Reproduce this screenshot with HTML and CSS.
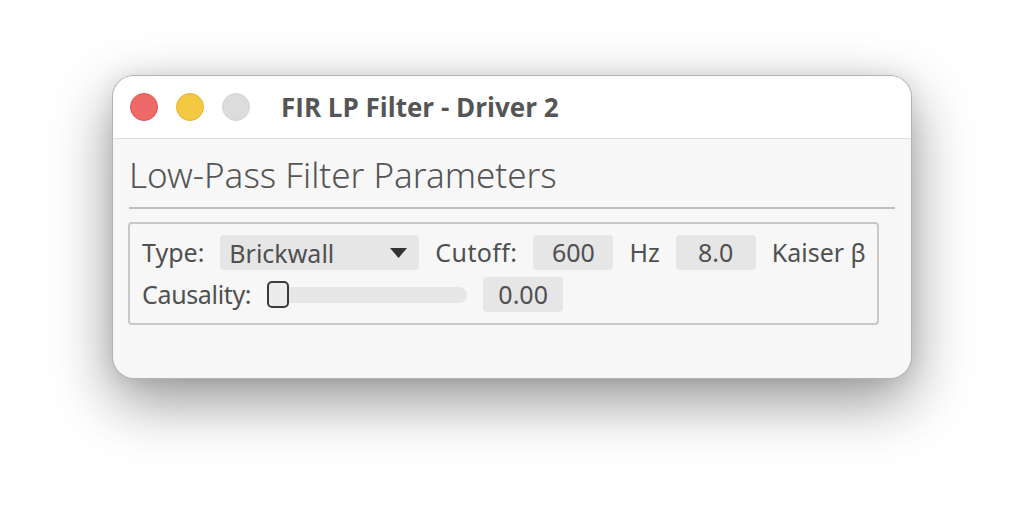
FILE: index.html
```html
<!DOCTYPE html>
<html>
<head>
<meta charset="utf-8">
<link rel="stylesheet" href="styles.css">
</head>
<body>
<div class="stage">
  <div class="window">
    <div class="titlebar">
      <div class="lights">
        <span class="light red"></span>
        <span class="light yellow"></span>
        <span class="light gray"></span>
      </div>
      <div class="title">FIR LP Filter - Driver 2</div>
    </div>
    <div class="content">
      <h1 class="heading">Low-Pass Filter Parameters</h1>
      <div class="sep"></div>
      <div class="group">
        <div class="row">
          <span class="label">Type:</span>
          <div class="dropdown">
            <span>Brickwall</span>
            <svg class="arrow" width="17" height="10" viewBox="0 0 17 10"><path d="M0 0H17L8.5 10Z" fill="#333"/></svg>
          </div>
          <span class="label label-wide">Cutoff:</span>
          <div class="num">600</div>
          <span class="label">Hz</span>
          <div class="num">8.0</div>
          <span class="label">Kaiser β</span>
        </div>
        <div class="row">
          <span class="label label-tight">Causality:</span>
          <div class="slider"><div class="thumb"></div></div>
          <div class="num">0.00</div>
        </div>
      </div>
    </div>
  </div>
</div>
</body>
</html>
```
FILE: styles.css
```css
html, body {
  margin: 0;
  padding: 0;
  background: #ffffff;
}
.stage {
  width: 1024px;
  height: 528px;
  padding: 75px 0 0 112px;
  box-sizing: border-box;
  overflow: hidden;
}
.window {
  width: 800px;
  height: 304px;
  box-sizing: border-box;
  border: 1px solid rgba(0, 0, 0, 0.28);
  border-radius: 22px;
  background: #f7f7f7;
  overflow: hidden;
  box-shadow: 0 22px 60px rgba(0, 0, 0, 0.42), 0 0 20px rgba(0, 0, 0, 0.08);
  font-family: "Noto Sans", "Open Sans", sans-serif;
  color: #505050;
}
.titlebar {
  height: 62px;
  background: #ffffff;
  border-bottom: 1px solid #dedede;
  display: flex;
  align-items: center;
  padding-left: 17px;
}
.lights {
  display: flex;
  gap: 18px;
}
.light {
  width: 28px;
  height: 28px;
  border-radius: 50%;
  box-sizing: border-box;
}
.red { background: #ee6a68; border: 1px solid #e0504d; }
.yellow { background: #f4c942; border: 1px solid #e4b22c; }
.gray { background: #dcdcdc; border: 1px solid #d2d2d2; }
.title {
  margin-left: 31px;
  font-family: "Open Sans", "Noto Sans", sans-serif;
  font-weight: 700;
  font-size: 26px;
  color: #555555;
}
.content {
  padding: 16px 16px 0 16px;
}
.heading {
  margin: 0;
  font-weight: 300;
  font-size: 35px;
  line-height: 40px;
  color: #555555;
}
.sep {
  height: 2px;
  background: #bfbfbf;
  margin-top: 12px;
}
.group {
  display: inline-flex;
  flex-direction: column;
  gap: 7px;
  margin-top: 13px;
  margin-left: -1px;
  border: 2px solid #c8c8c8;
  border-radius: 4px;
  padding: 11px 11px 11px 12px;
}
.row {
  display: flex;
  align-items: center;
  gap: 16px;
  height: 35px;
}
.label {
  font-size: 25px;
  line-height: 35px;
  white-space: nowrap;
}
.label-wide {
  letter-spacing: 0.4px;
}
.label-tight {
  letter-spacing: -0.35px;
}
.dropdown {
  width: 199px;
  height: 35px;
  box-sizing: border-box;
  background: #e6e6e6;
  border-radius: 4px;
  display: flex;
  align-items: center;
  justify-content: space-between;
  padding: 0 12px 0 9px;
  font-size: 25px;
}
.num {
  width: 80px;
  height: 35px;
  background: #e6e6e6;
  border-radius: 4px;
  font-size: 25px;
  line-height: 35px;
  text-align: center;
}
.slider {
  width: 200px;
  height: 16px;
  background: #e6e6e6;
  border-radius: 8px;
  display: flex;
  align-items: center;
}
.thumb {
  width: 22px;
  height: 27px;
  box-sizing: border-box;
  border: 2px solid #3a3a3a;
  border-radius: 5px;
  background: #ececec;
}
```
